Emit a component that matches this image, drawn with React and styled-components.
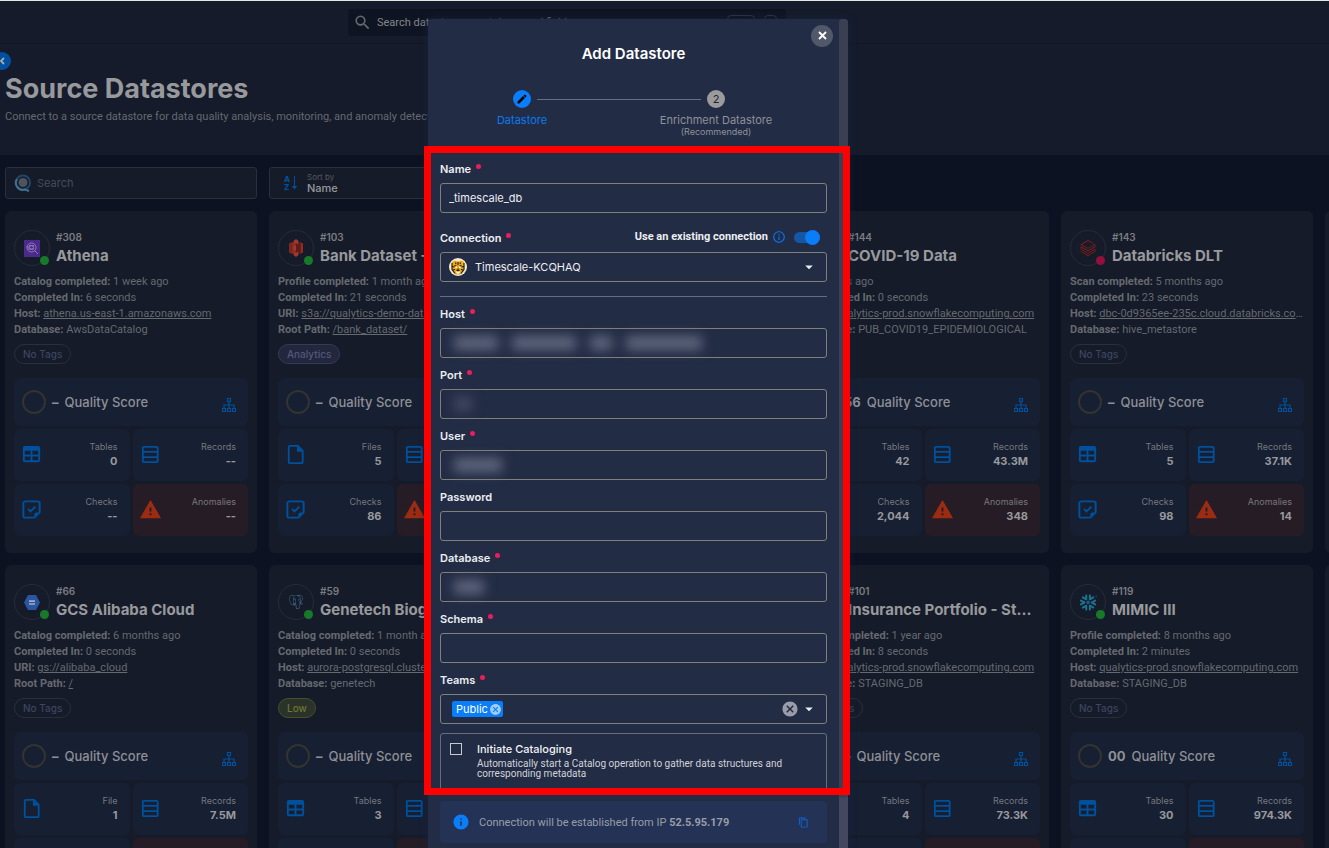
import React, { useState } from "react";
import styled, { createGlobalStyle } from "styled-components";
import {
  MdArrowDropDown,
  MdCancel,
  MdContentCopy,
  MdEdit,
  MdInfo,
  MdInfoOutline,
  MdSearch,
  MdWarning,
} from "react-icons/md";
import { SiDatabricks, SiPostgresql, SiSnowflake } from "react-icons/si";

const GlobalStyle = createGlobalStyle`
  * {
    box-sizing: border-box;
  }
  body {
    margin: 0;
    background: #0c1222;
    color: #999a9e;
    font-family: Inter, "Liberation Sans", sans-serif;
    font-size: 11px;
    overflow: hidden;
  }
  button,
  input,
  select {
    font-family: inherit;
    color: inherit;
  }
  button {
    padding: 0;
    border: none;
    background: none;
    cursor: pointer;
  }
`;

const Page = styled.div`
  position: relative;
  height: 100vh;
  overflow: hidden;
  border-top: 1px solid #dfe8e2;
`;

const TopBar = styled.header`
  display: flex;
  justify-content: center;
  height: 43px;
  padding: 8px 195px 0 0;
  background: #151b2a;
  border-bottom: 1px solid #121725;
`;

const GlobalSearch = styled.label`
  display: flex;
  align-items: center;
  gap: 5px;
  width: 438px;
  height: 27px;
  padding: 0 9px 0 5px;
  border-radius: 4px;
  background: #0f1422;
  color: #66686e;
  font-family: Roboto, Inter, sans-serif;
`;

const PlainInput = styled.input`
  flex: 1;
  min-width: 0;
  padding: 0;
  border: none;
  outline: none;
  background: none;
  font-size: 11px;

  &::placeholder {
    color: ${(props) => props.$hint || "#85868a"};
    opacity: 1;
  }
`;

const Key = styled.span`
  width: ${(props) => props.$width}px;
  height: 15px;
  margin-left: 4px;
  border: 1px solid #33363f;
  border-radius: 4px;
`;

const PageHead = styled.section`
  position: relative;
  height: 111px;
  padding: 26px 5px 0;
  background: #151b2a;
`;

const CollapseButton = styled.button`
  position: absolute;
  top: 8px;
  left: -7px;
  display: flex;
  align-items: center;
  justify-content: center;
  width: 18px;
  height: 18px;
  border-radius: 50%;
  background: #00509f;
  color: #a6a8ac;
`;

const PageTitle = styled.h1`
  margin: 0;
  font-size: 27px;
  font-weight: 700;
  line-height: 37px;
  color: #98999c;
`;

const PageText = styled.p`
  margin: 1px 0 0;
  font-family: Roboto, Inter, sans-serif;
  line-height: 18px;
  color: #66696f;
`;

const Filters = styled.div`
  display: flex;
  gap: 12px;
  padding: 12px 5px;
`;

const FilterBox = styled.label`
  display: flex;
  align-items: center;
  gap: 5px;
  width: 252px;
  height: 32px;
  padding: 0 8px;
  border: 1px solid #2a2f3d;
  border-radius: 3px;
  background: #151b29;
`;

const SortBox = styled(FilterBox)`
  gap: 8px;
  padding-left: 14px;
`;

const SortText = styled.span`
  display: flex;
  flex-direction: column;
  font-size: 8px;
  line-height: 9px;
  color: #55585f;
`;

const SortSelect = styled.select`
  height: 12px;
  padding: 0;
  border: none;
  background: none;
  appearance: none;
  font-size: 11px;
  font-weight: 500;
  line-height: 12px;
  color: #98999c;
`;

const CardGrid = styled.main`
  display: grid;
  grid-template-columns: repeat(6, minmax(252px, 1fr));
  gap: 12px;
  padding: 0 5px;
`;

const Card = styled.article`
  height: 342px;
  padding: 19px 9px 0;
  border-radius: 6px;
  background: #151b29;
`;

const CardHead = styled.div`
  display: flex;
  gap: 6px;
  height: 36px;
`;

const LogoRing = styled.span`
  position: relative;
  display: flex;
  flex: none;
  align-items: center;
  justify-content: center;
  width: 36px;
  height: 36px;
  border: 1px solid #262c3a;
  border-radius: 50%;
`;

const StatusDot = styled.span`
  position: absolute;
  right: 0;
  bottom: 0;
  width: 9px;
  height: 9px;
  border-radius: 50%;
  background: ${(props) => (props.$failed ? "#940f3c" : "#167a28")};
`;

const CardTitles = styled.div`
  min-width: 0;
`;

const CardId = styled.div`
  font-size: 10px;
  font-weight: 600;
  line-height: 14px;
  color: #7b7d82;
`;

const CardName = styled.h2`
  margin: 1px 0 0;
  overflow: hidden;
  text-overflow: ellipsis;
  white-space: nowrap;
  font-size: 15px;
  font-weight: 700;
  line-height: 22px;
  color: #98999c;
`;

const Details = styled.ul`
  margin: 8px 0 6px;
  padding: 0;
  list-style: none;
`;

const Detail = styled.li`
  height: 16px;
  overflow: hidden;
  text-overflow: ellipsis;
  white-space: nowrap;
  font-family: Roboto, Inter, sans-serif;
  line-height: 16px;
  color: #66696f;

  b {
    font-weight: 700;
  }
  a {
    color: inherit;
  }
`;

const TAG_COLORS = {
  "No Tags": ["#3d4560", "transparent", "#2a2f3d"],
  Low: ["#6c7730", "#2b3229", "#454e2b"],
  Analytics: ["#52587a", "#22273d", "#343a58"],
};

const Tag = styled.div`
  width: fit-content;
  height: 20px;
  padding: 0 8px;
  border: 1px solid ${(props) => TAG_COLORS[props.$name][2]};
  border-radius: 10px;
  background: ${(props) => TAG_COLORS[props.$name][1]};
  color: ${(props) => TAG_COLORS[props.$name][0]};
  font-size: 10px;
  font-weight: 500;
  line-height: 18px;
`;

const Quality = styled.div`
  display: flex;
  align-items: center;
  height: 48px;
  margin: 14px 0 3px;
  padding: 0 12px 0 8px;
  border-radius: 6px;
  background: #171f33;
  font-size: 13px;
  font-weight: 500;
  color: #8e9095;

  b {
    margin: 0 6px;
    font-weight: 700;
  }
  svg {
    margin: 6px 0 0 auto;
  }
`;

const Ring = styled.span`
  width: 24px;
  height: 24px;
  border: 2px solid #33332f;
  border-radius: 50%;
`;

const Tiles = styled.div`
  display: grid;
  grid-template-columns: 1fr 1fr;
  gap: 3px;
`;

const Tile = styled.div`
  display: flex;
  align-items: center;
  justify-content: space-between;
  height: 52px;
  padding: 0 12px 2px 6px;
  border-radius: 6px;
  background: ${(props) => (props.$alert ? "#261c25" : "#171f33")};
  color: ${(props) => (props.$alert ? "#9b2c12" : "#00509b")};
`;

const TileText = styled.div`
  font-size: 9px;
  line-height: 14px;
  text-align: right;
  color: #75777d;

  b {
    display: block;
    font-size: 11px;
    color: #98999c;
  }
`;

// dialog

const Overlay = styled.div`
  position: absolute;
  inset: 18px 0 0;
  display: flex;
  justify-content: center;
  padding-right: 53px;
`;

const Modal = styled.div`
  display: flex;
  width: 420px;
  height: 100%;
  border-radius: 4px 4px 0 0;
  background: #232c45;
  box-shadow: 0 0 8px #18233f;
  color: #eceef2;
`;

const ModalBody = styled.div`
  position: relative;
  display: flex;
  flex: 1;
  flex-direction: column;
  min-width: 0;
`;

const Rail = styled.div`
  width: 9px;
  border-radius: 4px 4px 0 0;
  background: #43475f;
`;

const Thumb = styled.div`
  height: 94%;
  border-radius: 4px;
  background: #3a3f51;
`;

const ModalHead = styled.div`
  flex: none;
  height: 127px;
  padding-top: 24px;
`;

const ModalTitle = styled.h2`
  margin: 0;
  font-size: 15px;
  font-weight: 600;
  line-height: 22px;
  text-align: center;
  color: #fff;
`;

const CloseButton = styled.button`
  position: absolute;
  top: 6px;
  right: 6px;
  display: flex;
  align-items: center;
  justify-content: center;
  width: 22px;
  height: 22px;
  padding-bottom: 2px;
  border-radius: 50%;
  background: #50586a;
  color: #fff;
`;

const Steps = styled.div`
  display: flex;
  padding: 25px 68px 0 39px;
`;

const Step = styled.div`
  display: flex;
  flex-direction: column;
  align-items: center;
  width: 110px;
  font-size: 11px;
  line-height: 14px;
  white-space: nowrap;
  color: ${(props) => (props.$active ? "#0a79f5" : "#8d9199")};

  small {
    font-size: 9px;
    line-height: 9px;
  }
`;

const StepDot = styled.span`
  display: flex;
  align-items: center;
  justify-content: center;
  width: 18px;
  height: 18px;
  margin-bottom: 5px;
  border-radius: 50%;
  background: ${(props) => (props.$active ? "#0a7df8" : "#9b9b9b")};
  color: #20242e;
`;

const StepLine = styled.div`
  flex: 1;
  height: 1px;
  margin: 9px -40px 0;
  background: #666e85;
`;

const FormArea = styled.div`
  position: relative;
  flex: 1;
  min-height: 0;

  &::after {
    content: "";
    position: absolute;
    inset: 0 -11px 0 -4px;
    border: 7px solid #fe0000;
    pointer-events: none;
  }
`;

const Form = styled.form`
  height: 100%;
  padding: 6px 12px 0;
  overflow: hidden;
`;

const LabelRow = styled.div`
  display: flex;
  align-items: flex-start;
  justify-content: space-between;
  height: 31px;
  margin-top: ${(props) => (props.$spaced ? 8 : 0)}px;
  padding-top: 8px;
  line-height: 18px;
`;

const Label = styled.label`
  font-weight: 600;
`;

const Required = styled.span`
  display: inline-block;
  width: 5px;
  height: 5px;
  margin-left: 5px;
  border-radius: 50%;
  background: #ec1d5c;
  vertical-align: 4px;
`;

const ToggleLabel = styled.label`
  display: flex;
  align-items: center;
  gap: 4px;
  height: 16px;
  margin-right: 7px;
  font-family: Roboto, Inter, sans-serif;
  font-weight: 700;
  white-space: nowrap;

  svg {
    margin-right: 4px;
    color: #0a72ea;
  }
`;

const Toggle = styled.input`
  position: relative;
  width: 26px;
  height: 11px;
  margin: 0;
  border-radius: 6px;
  appearance: none;
  background: ${(props) => (props.checked ? "#1357a5" : "#555c70")};

  &::after {
    content: "";
    position: absolute;
    top: -2px;
    left: ${(props) => (props.checked ? 11 : 0)}px;
    width: 15px;
    height: 15px;
    border-radius: 50%;
    background: #0a7df8;
  }
`;

const FieldBox = styled.div`
  position: relative;
  display: flex;
  align-items: center;
  height: 30px;
  padding: 0 8px;
  border: 1px solid #807f7c;
  border-radius: 3px;
`;

const ConnectionSelect = styled.select`
  flex: 1;
  height: 28px;
  padding: 0 8px;
  border: none;
  outline: none;
  appearance: none;
  background: none;
  font-size: 11px;
`;

const Redacted = styled.span`
  position: absolute;
  left: 13px;
  display: flex;
  gap: 14px;
  filter: blur(6px);
  pointer-events: none;
`;

const RedactedWord = styled.span`
  width: ${(props) => props.$width}px;
  height: 14px;
  background: ${(props) => (props.$faint ? "#414a60" : "#5f677d")};
`;

const Divider = styled.hr`
  height: 1px;
  margin: 14px 0 0;
  border: none;
  background: #666d7f;
`;

const Chip = styled.span`
  display: flex;
  align-items: center;
  gap: 1px;
  height: 16px;
  margin-left: 3px;
  padding: 0 1px 0 4px;
  border-radius: 2px;
  background: #0a7df8;
  color: #fff;
`;

const ChipRemove = styled.button`
  display: flex;
  color: #9fcbfb;
`;

const ClearButton = styled.button`
  display: flex;
  margin-right: 1px;
  color: #9a9da8;
`;

const OptionBox = styled.label`
  display: flex;
  gap: 15px;
  height: 66px;
  margin-top: 9px;
  padding: 9px;
  border: 1px solid #666d7f;
  border-radius: 3px;
`;

const CheckBox = styled.input`
  flex: none;
  width: 12px;
  height: 12px;
  margin: 0;
  border: 1px solid #c8cad0;
  appearance: none;

  &:checked {
    background: #0a7df8;
  }
`;

const OptionText = styled.span`
  font-family: Roboto, Inter, sans-serif;
  font-size: 10px;
  line-height: 10px;
  color: #d0d3d9;

  b {
    display: block;
    margin-bottom: 3px;
    font-family: Inter, sans-serif;
    font-size: 11px;
    font-weight: 500;
    line-height: 13px;
    color: #f2f3f6;
  }
`;

const Footer = styled.footer`
  flex: none;
  padding: 6px 12px 5px;
`;

const Notice = styled.div`
  display: flex;
  align-items: center;
  gap: 9px;
  height: 42px;
  padding: 0 18px 0 12px;
  border-radius: 4px;
  background: #243355;
  color: #999da8;
  font-family: Roboto, Inter, sans-serif;

  button {
    display: flex;
    margin-left: auto;
    color: #0a66dc;
  }
`;

const BLUE = "#0a7df8";

function CloseIcon() {
  return (
    <svg width="9" height="9" viewBox="0 0 9 9" stroke="currentColor" strokeWidth="1.8">
      <path d="m1 1 7 7M8 1 1 8" />
    </svg>
  );
}

function ChevronIcon() {
  return (
    <svg width="6" height="8" viewBox="0 0 6 8" fill="none" stroke="currentColor" strokeWidth="1.8">
      <path d="M5 1 2 4l3 3" />
    </svg>
  );
}

function SitemapIcon() {
  return (
    <svg width="14" height="14" viewBox="0 0 14 14" fill="none" stroke="#00509b">
      <path
        d="M5.500.5h3v3h-3zM.5 10.500h3v3h-3zM5.500 10.500h3v3h-3zM10.500 10.500h3v3h-3zM7 3.500v7M2 10.500V7h10v3.500"
        strokeWidth="1.2"
      />
    </svg>
  );
}

const tileIcons = {
  table: (
    <path
      fillRule="evenodd"
      fill="currentColor"
      d="M5 3h14a2 2 0 0 1 2 2v13a2 2 0 0 1-2 2H5a2 2 0 0 1-2-2V5a2 2 0 0 1 2-2ZM5 8v4h6V8ZM13 8v4h6V8ZM5 14v4h6v-4ZM13 14v4h6v-4Z"
    />
  ),
  records: (
    <path
      d="M5 4h13.500a1 1 0 0 1 1 1v14a1 1 0 0 1-1 1H5a1 1 0 0 1-1-1V5a1 1 0 0 1 1-1ZM4 9.300h15.500M4 14.700h15.500"
      stroke="currentColor"
      strokeWidth="1.9"
      fill="none"
    />
  ),
  file: (
    <>
      <path
        d="M6 3h8.500l5 5v12a1 1 0 0 1-1 1H6a1 1 0 0 1-1-1V4a1 1 0 0 1 1-1Z"
        stroke="currentColor"
        strokeWidth="1.9"
        fill="none"
      />
      <path d="M13.500 3v6h6Z" fill="currentColor" />
    </>
  ),
  checks: (
    <>
      <path
        d="M5.500 3.500h13a2 2 0 0 1 2 2V15L15 20.500H5.500a2 2 0 0 1-2-2v-13a2 2 0 0 1 2-2Z"
        stroke="currentColor"
        strokeWidth="2"
        fill="none"
      />
      <path d="M15 20.500V17a2 2 0 0 1 2-2h3.500Z" fill="currentColor" />
      <path d="m8.500 11.500 2.500 2.500 5-5" stroke="currentColor" strokeWidth="2" fill="none" />
    </>
  ),
};

function TileIcon({ name }) {
  if (name === "anomalies") return <MdWarning size={23} />;
  return (
    <svg width="23" height="23" viewBox="0 0 24 24">
      {tileIcons[name]}
    </svg>
  );
}

const logos = {
  athena: (
    <svg width="16" height="17" viewBox="0 0 16 17" fill="none">
      <path d="M0 0h16v17H0Z" fill="#4c2a8c" />
      <circle cx="7.5" cy="7.5" r="4.5" stroke="#8f79b8" />
      <circle cx="7.5" cy="7.5" r="2" stroke="#8f79b8" />
      <path d="M5 5.500h5M4 9h6M10.500 10.500l3.500 3.500M2.500 7h3" stroke="#8f79b8" />
    </svg>
  ),
  s3: (
    <svg width="16" height="18" viewBox="0 0 16 18">
      <path d="M1 4.500 3.500 3v12L1 13.500Z" fill="#7c2a22" />
      <path d="M3.500 3 8 5v8l-4.500 2Z" fill="#8f2b22" />
      <path d="m12.500 3-4.500 2v8l4.500 2Z" fill="#5e1d1a" />
      <path d="M12.500 3 15 4.500v9L12.500 15Z" fill="#94291f" />
      <path
        d="M5.500 2 8 0l2.500 2v3L8 4.500 5.500 5ZM5.500 16 8 18l2.500-2v-3l-2.500.5-2.500-.5ZM5.500 7 8 6.700v4.600L5.500 11Z"
        fill="#a3392d"
      />
    </svg>
  ),
  gcs: (
    <svg width="16" height="15" viewBox="0 0 16 15">
      <path
        d="M4.500 0h7a1 1 0 0 1 .8.5l3.700 7-3.700 7a1 1 0 0 1-.8.5h-7a1 1 0 0 1-.8-.5L0 7.500l3.700-7a1 1 0 0 1 .8-.5Z"
        fill="#2a55a0"
      />
      <path d="M5 5.300h6v1.600H5ZM5 8.200h6v1.600H5Z" fill="#a4adc0" />
    </svg>
  ),
  postgres: <SiPostgresql size={14} color="#4a7299" />,
  databricks: <SiDatabricks size={16} color="#8a2018" />,
  snowflake: <SiSnowflake size={17} color="#197390" />,
};

function TigerLogo() {
  return (
    <svg width="18" height="18" viewBox="0 0 18 18">
      <circle cx="9" cy="9" r="9" fill="#f6ecd0" />
      <path
        d="M3 4l2.500-1.500L9 3.500l3.500-1L15 4l.5 4.500-1 4.500-3 3.500h-5l-3-3.500-1-4.500Z"
        fill="#f0a81c"
      />
      <path
        d="M9 4v3M6.500 4.500 7 6M11.500 4.500 11 6M3.500 8.500l2 .5M14.500 8.500l-2 .5M4 12l2-.5M14 12l-2-.5M5.500 7.500l2 .5M12.500 7.500l-2 .5M7.500 12 9 13l1.500-1M9 10.500V13M3 5v6.500L6 15.500M15 5v6.500l-3 4"
        stroke="#1c1a1a"
        strokeWidth="1.1"
        fill="none"
      />
      <path d="M6.500 8.500H8V10H6.500ZM10 8.500h1.500V10H10ZM7 13.500h4l-1 2H8Z" fill="#fff" />
    </svg>
  );
}

const stores = [
  {
    id: 308,
    name: "Athena",
    logo: "athena",
    details: [
      ["Catalog completed", "1 week ago"],
      ["Completed In", "6 seconds"],
      ["Host", "athena.us-east-1.amazonaws.com", true],
      ["Database", "AwsDataCatalog"],
    ],
    tag: "No Tags",
    score: "–",
    kind: ["table", "Tables", "0"],
    counts: ["--", "--", "--"],
  },
  {
    id: 103,
    name: "Bank Dataset - Staging",
    logo: "s3",
    details: [
      ["Profile completed", "1 month ago"],
      ["Completed In", "21 seconds"],
      ["URI", "s3a://qualytics-demo-data", true],
      ["Root Path", "/bank_dataset/", true],
    ],
    tag: "Analytics",
    score: "–",
    kind: ["file", "Files", "5"],
    counts: ["--", "86", "--"],
  },
  null,
  {
    id: 144,
    name: "COVID-19 Data",
    logo: "snowflake",
    details: [
      ["", "6 months ago"],
      ["Completed In", "0 seconds"],
      ["Host", "qualytics-prod.snowflakecomputing.com", true],
      ["Database", "PUB_COVID19_EPIDEMIOLOGICAL"],
    ],
    tag: "Low",
    score: "56",
    kind: ["table", "Tables", "42"],
    counts: ["43.3M", "2,044", "348"],
  },
  {
    id: 143,
    name: "Databricks DLT",
    logo: "databricks",
    failed: true,
    details: [
      ["Scan completed", "5 months ago"],
      ["Completed In", "23 seconds"],
      ["Host", "dbc-0d9365ee-235c.cloud.databricks.com", true],
      ["Database", "hive_metastore"],
    ],
    tag: "No Tags",
    score: "–",
    kind: ["table", "Tables", "5"],
    counts: ["37.1K", "98", "14"],
  },
  null,
  {
    id: 66,
    name: "GCS Alibaba Cloud",
    logo: "gcs",
    details: [
      ["Catalog completed", "6 months ago"],
      ["Completed In", "0 seconds"],
      ["URI", "gs://alibaba_cloud", true],
      ["Root Path", "/", true],
    ],
    tag: "No Tags",
    score: "–",
    kind: ["file", "File", "1"],
    counts: ["7.5M", "", ""],
  },
  {
    id: 59,
    name: "Genetech Biogeniuses",
    logo: "postgres",
    details: [
      ["Catalog completed", "1 month ago"],
      ["Completed In", "0 seconds"],
      ["Host", "aurora-postgresql.cluster", true],
      ["Database", "genetech"],
    ],
    tag: "Low",
    score: "–",
    kind: ["table", "Tables", "3"],
    counts: ["", "", ""],
  },
  null,
  {
    id: 101,
    name: "Insurance Portfolio - Staging",
    logo: "snowflake",
    details: [
      ["Scan completed", "1 year ago"],
      ["Completed In", "8 seconds"],
      ["Host", "qualytics-prod.snowflakecomputing.com", true],
      ["Database", "STAGING_DB"],
    ],
    tag: "No Tags",
    score: "–",
    kind: ["table", "Tables", "4"],
    counts: ["73.3K", "", ""],
  },
  {
    id: 119,
    name: "MIMIC III",
    logo: "snowflake",
    details: [
      ["Profile completed", "8 months ago"],
      ["Completed In", "2 minutes"],
      ["Host", "qualytics-prod.snowflakecomputing.com", true],
      ["Database", "STAGING_DB"],
    ],
    tag: "No Tags",
    score: "00",
    kind: ["table", "Tables", "30"],
    counts: ["974.3K", "", ""],
  },
  null,
];

function StatTile({ icon, label, value }) {
  return (
    <Tile $alert={icon === "anomalies"}>
      <TileIcon name={icon} />
      <TileText>
        {label}
        <b>{value}</b>
      </TileText>
    </Tile>
  );
}

function StoreCard({ store }) {
  return (
    <Card>
      <CardHead>
        <LogoRing>
          {logos[store.logo]}
          <StatusDot $failed={store.failed} />
        </LogoRing>
        <CardTitles>
          <CardId>#{store.id}</CardId>
          <CardName>{store.name}</CardName>
        </CardTitles>
      </CardHead>
      <Details>
        {store.details.map(([label, text, link], i) => (
          <Detail key={i}>
            {label && <b>{label}:</b>} {link ? <a href="#store">{text}</a> : text}
          </Detail>
        ))}
      </Details>
      <Tag $name={store.tag}>{store.tag}</Tag>
      <Quality>
        <Ring />
        <b>{store.score}</b>
        Quality Score
        <SitemapIcon />
      </Quality>
      <Tiles>
        <StatTile icon={store.kind[0]} label={store.kind[1]} value={store.kind[2]} />
        <StatTile icon="records" label="Records" value={store.counts[0]} />
        <StatTile icon="checks" label="Checks" value={store.counts[1]} />
        <StatTile icon="anomalies" label="Anomalies" value={store.counts[2]} />
      </Tiles>
    </Card>
  );
}

// widths are the hidden words of a stored connection
const connectionFields = [
  { name: "host", label: "Host", required: true, words: [44, 64, 22, 76] },
  { name: "port", label: "Port", required: true, words: [18], faint: true },
  { name: "user", label: "User", required: true, words: [48] },
  { name: "password", label: "Password" },
  { name: "database", label: "Database", required: true, words: [30] },
  { name: "schema", label: "Schema", required: true },
];

function FieldLabel({ htmlFor, required, children }) {
  return (
    <Label htmlFor={htmlFor}>
      {children}
      {required && <Required />}
    </Label>
  );
}

function AddDatastore() {
  const [name, setName] = useState("_timescale_db");
  const [existing, setExisting] = useState(true);
  const [catalog, setCatalog] = useState(false);

  return (
    <Modal role="dialog" aria-label="Add Datastore">
      <ModalBody>
        <ModalHead>
          <ModalTitle>Add Datastore</ModalTitle>
          <CloseButton aria-label="Close">
            <CloseIcon />
          </CloseButton>
          <Steps>
            <Step $active>
              <StepDot $active>
                <MdEdit size={12} color="#000" />
              </StepDot>
              Datastore
            </Step>
            <StepLine />
            <Step>
              <StepDot>2</StepDot>
              Enrichment Datastore
              <small>(Recommended)</small>
            </Step>
          </Steps>
        </ModalHead>
        <FormArea>
          <Form>
            <LabelRow>
              <FieldLabel htmlFor="name" required>
                Name
              </FieldLabel>
            </LabelRow>
            <FieldBox>
              <PlainInput id="name" value={name} onChange={(e) => setName(e.target.value)} />
            </FieldBox>
            <LabelRow $spaced>
              <FieldLabel htmlFor="connection" required>
                Connection
              </FieldLabel>
              <ToggleLabel>
                Use an existing connection
                <MdInfoOutline size={14} />
                <Toggle
                  type="checkbox"
                  role="switch"
                  checked={existing}
                  onChange={() => setExisting(!existing)}
                />
              </ToggleLabel>
            </LabelRow>
            <FieldBox>
              <TigerLogo />
              <ConnectionSelect id="connection">
                <option>Timescale-KCQHAQ</option>
              </ConnectionSelect>
              <MdArrowDropDown size={18} />
            </FieldBox>
            <Divider />
            {connectionFields.map((field) => (
              <div key={field.name}>
                <LabelRow>
                  <FieldLabel htmlFor={field.name} required={field.required}>
                    {field.label}
                  </FieldLabel>
                </LabelRow>
                <FieldBox>
                  <PlainInput
                    id={field.name}
                    type={field.name === "password" ? "password" : "text"}
                  />
                  {field.words && (
                    <Redacted>
                      {field.words.map((width, i) => (
                        <RedactedWord key={i} $width={width} $faint={field.faint} />
                      ))}
                    </Redacted>
                  )}
                </FieldBox>
              </div>
            ))}
            <LabelRow>
              <FieldLabel htmlFor="teams" required>
                Teams
              </FieldLabel>
            </LabelRow>
            <FieldBox>
              <Chip>
                Public
                <ChipRemove type="button" aria-label="Remove Public">
                  <MdCancel size={13} />
                </ChipRemove>
              </Chip>
              <PlainInput id="teams" />
              <ClearButton type="button" aria-label="Clear teams">
                <MdCancel size={18} />
              </ClearButton>
              <MdArrowDropDown size={18} />
            </FieldBox>
            <OptionBox>
              <CheckBox
                type="checkbox"
                checked={catalog}
                onChange={() => setCatalog(!catalog)}
              />
              <OptionText>
                <b>Initiate Cataloging</b>
                Automatically start a Catalog operation to gather data structures and
                corresponding metadata
              </OptionText>
            </OptionBox>
          </Form>
        </FormArea>
        <Footer>
          <Notice>
            <MdInfo size={18} color={BLUE} />
            <span>
              Connection will be established from IP <b>52.5.95.179</b>
            </span>
            <button aria-label="Copy IP">
              <MdContentCopy size={11} />
            </button>
          </Notice>
        </Footer>
      </ModalBody>
      <Rail>
        <Thumb />
      </Rail>
    </Modal>
  );
}

function App() {
  return (
    <>
      <GlobalStyle />
      <Page>
        <TopBar>
          <GlobalSearch>
            <MdSearch size={19} />
            <PlainInput placeholder="Search datastores, containers and fields" />
            <Key $width={28} />
            <Key $width={13} />
          </GlobalSearch>
        </TopBar>
        <PageHead>
          <CollapseButton aria-label="Collapse menu">
            <ChevronIcon />
          </CollapseButton>
          <PageTitle>Source Datastores</PageTitle>
          <PageText>
            Connect to a source datastore for data quality analysis, monitoring, and anomaly
            detection.
          </PageText>
        </PageHead>
        <Filters>
          <FilterBox>
            <svg width="18" height="18" viewBox="0 0 18 18" fill="none">
              <circle cx="9" cy="8.5" r="7" stroke="#1f4766" strokeWidth="2" />
              <path d="M3 5a7 7 0 0 0 8 10.500l4 1.500" stroke="#41708f" strokeWidth="2" />
              <circle cx="9" cy="8.5" r="4.5" fill="#50545e" />
            </svg>
            <PlainInput aria-label="Search" placeholder="Search" $hint="#484c55" />
          </FilterBox>
          <SortBox>
            <svg width="15" height="16" viewBox="0 0 15 16" fill="#00509b">
              <text x="0" y="7" fontSize="8" fontWeight="800">
                A
              </text>
              <text x="0" y="15" fontSize="8" fontWeight="800">
                Z
              </text>
              <path d="M10.500 1v11M8.500 11.500h4l-2 2.500Z" stroke="#00509b" />
            </svg>
            <SortText>
              Sort by
              <SortSelect>
                <option>Name</option>
              </SortSelect>
            </SortText>
          </SortBox>
        </Filters>
        <CardGrid>
          {stores.map((store, i) =>
            store ? <StoreCard key={i} store={store} /> : <Card key={i} />
          )}
        </CardGrid>
        <Overlay>
          <AddDatastore />
        </Overlay>
      </Page>
    </>
  );
}

export default App;
